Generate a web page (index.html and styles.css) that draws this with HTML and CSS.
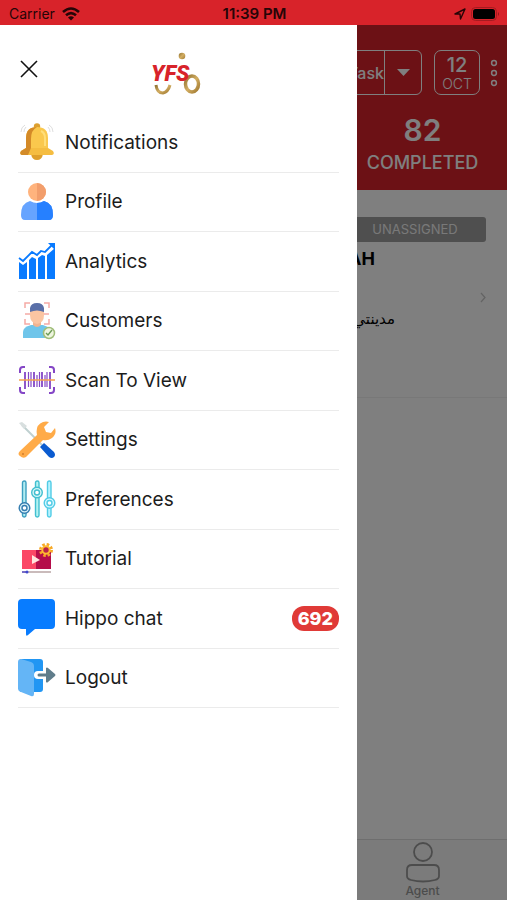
FILE: index.html
```
<!DOCTYPE html>
<html lang="en">
<head>
  <meta charset="utf-8">
  <meta name="viewport" content="width=device-width, initial-scale=1">
  <title>YFS</title>
  <link rel="stylesheet" href="styles.css">
</head>
<body>

  <div class="status-bar">
    <div class="carrier">
      <span>Carrier</span>
      <svg width="18" height="14" viewBox="0 0 18 14" fill="none" stroke="#260507" stroke-width="2.6">
        <path d="M1 5 Q9 -2 17 5"/>
        <path d="M4 8.300 Q9 4 14 8.300"/>
        <path d="M9 13.500 L6 10.500 Q9 8 12 10.500 Z" fill="#260507" stroke="none"/>
      </svg>
    </div>
    <span class="clock">11:39 PM</span>
    <div class="battery">
      <svg width="12" height="12" viewBox="0 0 12 12" fill="none" stroke="#260507" stroke-width="1.400" stroke-linejoin="round">
        <path d="M1 6 L11 1 L6.500 11 L6 6 Z"/>
      </svg>
      <svg width="29" height="14" viewBox="0 0 29 14">
        <rect x="0.500" y="0.500" width="25" height="13" rx="4" fill="none" stroke="#a51b20"/>
        <rect x="2" y="2" width="22" height="10" rx="2.500" fill="#000"/>
        <path d="M27 5 Q29 7 27 9 Z" fill="#8d171c"/>
      </svg>
    </div>
  </div>

  <div class="stage">

    <!-- Tasks screen -->
    <main class="screen">
      <header class="top">
        <div class="toolbar">
          <div class="task-group">
            <button class="task-btn">Task</button>
            <button class="task-more" aria-label="Choose task type">
              <svg width="13" height="7" viewBox="0 0 13 7"><path d="M0 0 H13 L6.500 7 Z" fill="#fff"/></svg>
            </button>
          </div>
          <button class="date-btn"><b>12</b><span>OCT</span></button>
          <button class="dots" aria-label="More">
            <svg width="8" height="28" viewBox="0 0 8 28" fill="none" stroke="#fff" stroke-width="1.500">
              <circle cx="4" cy="4" r="2.400"/><circle cx="4" cy="14" r="2.400"/><circle cx="4" cy="24" r="2.400"/>
            </svg>
          </button>
        </div>
        <div class="stats">
          <div class="stat"><b>82</b><span>COMPLETED</span></div>
        </div>
      </header>

      <section class="task">
        <div class="task-status">UNASSIGNED</div>
        <div class="task-name">AH</div>
        <div class="task-arrow">
          <svg width="6" height="11" viewBox="0 0 6 11" fill="none" stroke="#c8c8c8" stroke-width="1.300"><path d="M1 1 L5 5.500 L1 10"/></svg>
        </div>
        <div class="task-address" lang="ar" dir="rtl">مدينتي</div>
      </section>

      <nav class="tabs">
        <a href="#" class="tab">
          <svg width="36" height="42" viewBox="0 0 36 42" fill="none" stroke="#999" stroke-width="1.800">
            <circle cx="18" cy="10" r="9"/>
            <path d="M7 23 H29 Q34 23 34 28 V34 Q34 37 30 38 Q18 41 6 38 Q2 37 2 34 V28 Q2 23 7 23 Z"/>
          </svg>
          <span>Agent</span>
        </a>
      </nav>
    </main>

    <div class="scrim"></div>

    <!-- Side menu -->
    <aside class="drawer">
      <div class="drawer-head">
        <button class="close" aria-label="Close">
          <svg width="18" height="18" viewBox="0 0 18 18" stroke="#111" stroke-width="1.600"><path d="M1 1 L17 17 M17 1 L1 17"/></svg>
        </button>
        <svg class="logo" width="50" height="44" viewBox="0 0 50 44">
          <defs>
            <linearGradient id="gold" x1="0" y1="0" x2="1" y2="1">
              <stop offset="0" stop-color="#8f7130"/><stop offset="0.500" stop-color="#d2ad62"/><stop offset="1" stop-color="#a17a31"/>
            </linearGradient>
          </defs>
          <circle cx="29" cy="5" r="3.300" fill="url(#gold)"/>
          <path d="M3 34 Q4 42 10 42 Q15 41 17 34" fill="none" stroke="url(#gold)" stroke-width="3"/>
          <ellipse cx="39" cy="33" rx="6.500" ry="8" fill="none" stroke="url(#gold)" stroke-width="3.500"/>
          <text class="logo-text" x="-2" y="30">YFS</text>
        </svg>
      </div>

      <ul class="menu">
        <li><a href="#">
          <svg class="icon" viewBox="0 0 38 38">
            <path d="M3 9 Q3 4 7 2 M6 9 Q6 6 8 4 M35 9 Q35 4 31 2 M32 9 Q32 6 30 4" fill="none" stroke="#dedede"/>
            <path d="M13 31 H25 Q24 37 19 37 Q14 37 13 31 Z" fill="#dfa02c"/>
            <circle cx="19" cy="3.500" r="3.200" fill="#dda030"/>
            <path d="M8 27 V15 Q8 4 19 4 Q30 4 30 15 V27 Z" fill="#fac84d"/>
            <path d="M8 27 V15 Q8 4 19 4 Q13 7 13 16 V27 Z" fill="#d48a28"/>
            <path d="M23 8 Q27 10 27 15 V23" fill="none" stroke="#ffde79" stroke-width="2"/>
            <path d="M8 25 H30 L35 28 Q37 31 34 32 H4 Q1 31 3 28 Z" fill="#f5bd41"/>
            <path d="M8 25 H13 L10 32 H4 Q1 31 3 28 Z" fill="#d38b29"/>
          </svg>
          <span>Notifications</span></a></li>
        <li><a href="#">
          <svg class="icon" viewBox="0 0 38 38">
            <path d="M12 18 Q19 22 26 18 Q35 20 35 32 Q35 37 31 37 H7 Q3 37 3 32 Q3 20 12 18 Z" fill="#66a4ff"/>
            <path d="M19 20 Q23 20 26 18 Q35 20 35 32 Q35 37 31 37 H19 Z" fill="#2680ff"/>
            <circle cx="19" cy="9" r="9" fill="#ffb37d"/>
            <path d="M19 0 A9 9 0 0 1 19 18 Z" fill="#f29e6c"/>
          </svg>
          <span>Profile</span></a></li>
        <li><a href="#">
          <svg class="icon" viewBox="0 0 38 38" fill="#087aff">
            <path d="M1 20 L5 23 L9 20 V37 H1 Z M11 18 L14 15 L18 17 V37 H11 Z M20 16 L24 13 L27 14 V37 H20 Z M29 13 L37 6 V37 H29 Z"/>
            <path d="M1 16 L5 19 L14 10 L19 13 L23 9 L27 10 L34 3" fill="none" stroke="#087aff" stroke-width="1.800"/>
            <path d="M30 1 H37 V8 Z"/>
          </svg>
          <span>Analytics</span></a></li>
        <li><a href="#">
          <svg class="icon" viewBox="0 0 38 38">
            <path d="M7 6 V1 H12 M26 1 H31 V6 M7 17 V22 H12 M26 22 H31 V17 M7 12 H31" fill="none" stroke="#f5aaa5" stroke-width="1.500"/>
            <path d="M5 36 V30 Q5 25 13 23 H25 Q32 25 33 30 V36 Z" fill="#6fc5ea"/>
            <path d="M15 19 H23 V23 Q19 27 15 23 Z" fill="#f2b491"/>
            <path d="M12 8 H26 V13 Q26 21 19 22 Q12 21 12 13 Z" fill="#fbc5a2"/>
            <path d="M12 10 V6 Q13 1 19 1 Q25 1 26 6 V10 Q19 7 12 10 Z" fill="#596fa8"/>
            <circle cx="31" cy="31" r="5.500" fill="#eef5df" stroke="#a0bd79" stroke-width="1.500"/>
            <path d="M28 31 L30 33 L34 28" fill="none" stroke="#6d9b58" stroke-width="1.400"/>
          </svg>
          <span>Customers</span></a></li>
        <li><a href="#">
          <svg class="icon" viewBox="0 0 38 38" fill="none" stroke="#8446c6">
            <path d="M7 6 H5 Q2 6 2 9 V12 M31 6 H33 Q36 6 36 9 V12 M2 26 V29 Q2 32 5 32 H7 M36 26 V29 Q36 32 33 32 H31" stroke-width="2"/>
            <path d="M7 11 V28 M16 11 V26 M24 11 V26 M32 11 V28" stroke-width="1.800"/>
            <path d="M10.500 11 V26 M13 11 V26 M19 14 V26 M21.500 11 V26 M27 14 V26 M29 11 V26" stroke-width="1.200"/>
            <path d="M1 19 H37" stroke="#f6a24b" stroke-width="1.400"/>
          </svg>
          <span>Scan To View</span></a></li>
        <li><a href="#">
          <svg class="icon" viewBox="0 0 38 38">
            <path d="M4 4 L25 25" stroke="#bfd0d0" stroke-width="2"/>
            <path d="M1 2 L4 1 L9 5 L6 8 Z" fill="#d8dfdf"/>
            <path d="M22 26 L26 22 L36 31 Q38 34 36 36 Q34 38 31 36 Z" fill="#0a5bd0"/>
            <path d="M2 30 L19 14 Q17 4 25 1 Q28 0 31 1 L26 6 L28 11 L33 12 L37 7 Q39 13 34 17 Q30 20 25 19 L8 36 Q5 38 2 35 Q-1 33 2 30 Z" fill="#ffab48"/>
            <circle cx="5" cy="33" r="1" fill="#d17c2c"/>
          </svg>
          <span>Settings</span></a></li>
        <li><a href="#">
          <svg class="icon" viewBox="0 0 38 38" stroke-width="1.400">
            <g fill="#b2edf2" stroke="#3d9fc0">
              <rect x="4.500" y="1" width="3.500" height="36" rx="1.700"/>
              <circle cx="6.500" cy="28" r="5.300" fill="#d8f2f8" stroke="#357db0"/><circle cx="6.500" cy="28" r="2.500" fill="#fff" stroke="#357db0"/>
            </g>
            <g fill="#b2f3f2" stroke="#43bfd0">
              <rect x="17.500" y="1" width="3.500" height="36" rx="1.700"/>
              <circle cx="19" cy="12.500" r="5.300" fill="#d8f7f8"/><circle cx="19" cy="12.500" r="2.500" fill="#fff"/>
            </g>
            <g fill="#b8f3ff" stroke="#52cce6">
              <rect x="29.500" y="1" width="3.500" height="36" rx="1.700"/>
              <circle cx="31.500" cy="23" r="5.300" fill="#d8f7ff"/><circle cx="31.500" cy="23" r="2.500" fill="#fff"/>
            </g>
          </svg>
          <span>Preferences</span></a></li>
        <li><a href="#">
          <svg class="icon" viewBox="0 0 38 38">
            <path d="M4 10 H18 V29 H4 Z" fill="#fb4766"/>
            <path d="M18 10 H33 V29 H18 Z" fill="#b50d4a"/>
            <path d="M14 15 L22 20 L14 24 Z" fill="#ffe5df"/>
            <path d="M4 32 H33" stroke="#b9a5a5" stroke-width="1.500"/>
            <path d="M4 32 H10" stroke="#5b52c8" stroke-width="1.500"/>
            <circle cx="9" cy="32" r="1.500" fill="#3e48cf"/>
            <circle cx="28" cy="10" r="5.500" fill="none" stroke="#f7a928" stroke-width="3" stroke-dasharray="2.500 1.820"/>
            <circle cx="28" cy="10" r="3.700" fill="#b9234a" stroke="#ffbd32" stroke-width="2"/>
          </svg>
          <span>Tutorial</span></a></li>
        <li><a href="#">
          <svg class="icon" viewBox="0 0 38 38"><path d="M4 0 H33 Q37 0 37 4 V26 Q37 30 33 30 H17 L10 36 Q8 38 8 35 V30 H4 Q0 30 0 26 V4 Q0 0 4 0 Z" fill="#087cff"/></svg>
          <span>Hippo chat</span><em class="count">692</em></a></li>
        <li><a href="#">
          <svg class="icon" viewBox="0 0 38 38">
            <rect x="1" y="0" width="24" height="33" rx="3" fill="#2196f3"/>
            <path d="M3 0 L13 3 Q16 4 16 7 V35 Q16 38 13 37 L3 33 Q0 32 0 30 V3 Q0 0 3 0 Z" fill="#64b5f6"/>
            <path d="M28 16 H20" stroke="#fff" stroke-width="8" stroke-linecap="round"/>
            <path d="M21 16 H30" stroke="#607d8b" stroke-width="3" stroke-linecap="round"/>
            <path d="M28 9 Q29 8 30 9 L37 15 Q38 16 37 17 L30 23 Q29 24 28 23 Z" fill="#607d8b"/>
          </svg>
          <span>Logout</span></a></li>
      </ul>
    </aside>
  </div>

</body>
</html>
```
FILE: styles.css
```
* {
  box-sizing: border-box;
}
body {
  margin: 0;
  height: 100vh;
  display: flex;
  flex-direction: column;
  font-family: Inter, "Liberation Sans", sans-serif;
  color: #1c1c1c;
}
button {
  background: none;
  border: none;
  padding: 0;
  color: inherit;
  font-family: inherit;
  cursor: pointer;
}
a {
  color: inherit;
  text-decoration: none;
}
svg {
  display: block;
}

/* status bar */
.status-bar {
  height: 25px;
  padding: 2px 7px 0 9px;
  display: grid;
  grid-template-columns: 1fr auto 1fr;
  align-items: center;
  background: #d8232a;
  color: #260507;
  font-size: 14px;
}
.carrier {
  display: flex;
  align-items: center;
  gap: 7px;
}
.clock {
  font-size: 15px;
  font-weight: 600;
}
.battery {
  display: flex;
  justify-content: flex-end;
  align-items: center;
  gap: 5px;
}

/* tasks screen */
.stage {
  flex: 1;
  position: relative;
  display: flex;
  overflow: hidden;
}
.screen {
  flex: 1;
  display: flex;
  flex-direction: column;
  background: #fff;
}
.top {
  height: 165px;
  padding-top: 25px;
  background: #d8232a;
  color: #fff;
}
.toolbar {
  display: flex;
  justify-content: flex-end;
  align-items: center;
  padding-right: 9px;
}
.task-group {
  display: flex;
  height: 45px;
  border: 1px solid #fff;
  border-radius: 6px;
}
.task-btn {
  width: 96px;
  text-align: right;
  font-size: 16px;
  font-weight: 500;
}
.task-more {
  width: 37px;
  border-left: 1px solid #fff;
  display: flex;
  align-items: center;
  justify-content: center;
}
.date-btn {
  width: 46px;
  height: 45px;
  margin-left: 12px;
  border: 1px solid #fff;
  border-radius: 7px;
  display: flex;
  flex-direction: column;
  align-items: center;
  justify-content: center;
}
.date-btn b {
  font-size: 20px;
  line-height: 22px;
  font-weight: 500;
}
.date-btn span {
  font-size: 14px;
  line-height: 16px;
  font-weight: 300;
}
.dots {
  margin-left: 10px;
}
.stats {
  display: grid;
  grid-template-columns: repeat(3, 1fr);
  padding-top: 18px;
}
.stat {
  grid-column: 3;
  display: flex;
  flex-direction: column;
  align-items: center;
}
.stat b {
  font-size: 30px;
  line-height: 34px;
  font-weight: 600;
}
.stat span {
  font-size: 18px;
  line-height: 32px;
  font-weight: 500;
}
.task {
  height: 208px;
  padding: 27px 21px 0;
  border-bottom: 1px solid #f0f0f0;
  display: flex;
  flex-direction: column;
  align-items: flex-end;
}
.task-status {
  width: 142px;
  height: 25px;
  border-radius: 3px;
  background: #9e9e9e;
  color: #f2f2f2;
  font-size: 13px;
  line-height: 25px;
  text-align: center;
}
.task-name {
  padding-right: 111px;
  color: #000;
  font-size: 18px;
  line-height: 34px;
  font-weight: 700;
}
.task-arrow {
  padding-top: 16px;
}
.task-address {
  padding-right: 91px;
  color: #000;
  font-family: "DejaVu Sans", sans-serif;
  font-size: 15px;
  line-height: 32px;
}
.tabs {
  height: 61px;
  margin-top: auto;
  border-top: 1px solid #dcdcdc;
  background: #f6f6f6;
  display: grid;
  grid-template-columns: repeat(3, 1fr);
}
.tab {
  grid-column: 3;
  display: flex;
  flex-direction: column;
  align-items: center;
  padding-top: 2px;
  color: #999;
  font-size: 12px;
  line-height: 14px;
  font-weight: 500;
}
.scrim {
  position: absolute;
  inset: 0;
  background: rgba(0, 0, 0, 0.5);
}

/* side menu */
.drawer {
  position: absolute;
  top: 0;
  bottom: 0;
  left: 0;
  width: 70.4%;
  padding: 0 18px;
  background: #fff;
}
.drawer-head {
  height: 88px;
  display: grid;
  grid-template-columns: 1fr auto 1fr;
  align-items: center;
}
.close {
  justify-self: start;
  padding: 2px;
}
.logo {
  margin-top: 8px;
  overflow: visible;
}
.logo-text {
  font-family: Roboto, sans-serif;
  font-size: 22px;
  font-weight: 900;
  font-style: italic;
  fill: #d8232a;
}
.menu {
  list-style: none;
  margin: 0;
  padding: 0;
  min-height: 595px;
  display: grid;
  grid-auto-rows: 1fr;
}
.menu li {
  border-bottom: 1px solid #ebebeb;
}
.menu a {
  height: 100%;
  display: flex;
  align-items: center;
  gap: 9px;
  font-size: 19px;
}
.icon {
  width: 38px;
  height: 38px;
}
.count {
  margin-left: auto;
  padding: 0 6px;
  border-radius: 12px;
  background: #e03a37;
  color: #fff;
  font-size: 18px;
  line-height: 25px;
  font-style: normal;
  font-weight: 800;
}
```
